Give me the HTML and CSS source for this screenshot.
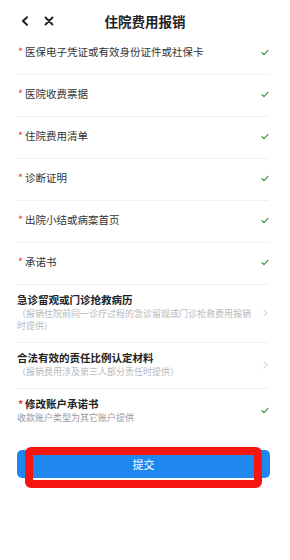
FILE: index.html
```html
<!DOCTYPE html>
<html lang="zh-CN">
<head>
<meta charset="utf-8">
<title>住院费用报销</title>
<link rel="stylesheet" href="styles.css">
</head>
<body>
<div class="page">
  <header class="header">
    <div class="nav">
      <svg class="ico-back" width="8" height="10" viewBox="0 0 8 10"><path d="M6 1.2 L2 5 L6 8.8" fill="none" stroke="#222" stroke-width="2" stroke-linecap="round" stroke-linejoin="round"/></svg>
      <svg class="ico-close" width="10" height="10" viewBox="0 0 10 10"><path d="M1.5 1.5 L8.5 8.5 M8.5 1.5 L1.5 8.5" fill="none" stroke="#222" stroke-width="1.9" stroke-linecap="round"/></svg>
    </div>
    <h1 class="title">住院费用报销</h1>
    <div></div>
  </header>

  <ul class="list">
    <li class="row"><span class="label"><i class="req">*</i>医保电子凭证或有效身份证件或社保卡</span><svg class="check" viewBox="0 0 8 7"><path d="M1 3.8 L3 5.6 L7 1.4" fill="none" stroke="#3f9a4c" stroke-width="1.3" stroke-linecap="round" stroke-linejoin="round"/></svg></li>
    <li class="row"><span class="label"><i class="req">*</i>医院收费票据</span><svg class="check" viewBox="0 0 8 7"><path d="M1 3.8 L3 5.6 L7 1.4" fill="none" stroke="#3f9a4c" stroke-width="1.3" stroke-linecap="round" stroke-linejoin="round"/></svg></li>
    <li class="row"><span class="label"><i class="req">*</i>住院费用清单</span><svg class="check" viewBox="0 0 8 7"><path d="M1 3.8 L3 5.6 L7 1.4" fill="none" stroke="#3f9a4c" stroke-width="1.3" stroke-linecap="round" stroke-linejoin="round"/></svg></li>
    <li class="row"><span class="label"><i class="req">*</i>诊断证明</span><svg class="check" viewBox="0 0 8 7"><path d="M1 3.8 L3 5.6 L7 1.4" fill="none" stroke="#3f9a4c" stroke-width="1.3" stroke-linecap="round" stroke-linejoin="round"/></svg></li>
    <li class="row"><span class="label"><i class="req">*</i>出院小结或病案首页</span><svg class="check" viewBox="0 0 8 7"><path d="M1 3.8 L3 5.6 L7 1.4" fill="none" stroke="#3f9a4c" stroke-width="1.3" stroke-linecap="round" stroke-linejoin="round"/></svg></li>
    <li class="row"><span class="label"><i class="req">*</i>承诺书</span><svg class="check" viewBox="0 0 8 7"><path d="M1 3.8 L3 5.6 L7 1.4" fill="none" stroke="#3f9a4c" stroke-width="1.3" stroke-linecap="round" stroke-linejoin="round"/></svg></li>
    <li class="row row-multi">
      <div class="text">
        <div class="strong">急诊留观或门诊抢救病历</div>
        <div class="sub light">（报销住院前同一诊疗过程的急诊留观或门诊抢救费用报销时提供）</div>
      </div>
      <svg class="chev" viewBox="0 0 5 8"><path d="M1 1 L4 4 L1 7" fill="none" stroke="#c8c8c8" stroke-width="1" stroke-linecap="round" stroke-linejoin="round"/></svg>
    </li>
    <li class="row row-multi">
      <div class="text">
        <div class="strong">合法有效的责任比例认定材料</div>
        <div class="sub light">（报销费用涉及第三人部分责任时提供）</div>
      </div>
      <svg class="chev" viewBox="0 0 5 8"><path d="M1 1 L4 4 L1 7" fill="none" stroke="#c8c8c8" stroke-width="1" stroke-linecap="round" stroke-linejoin="round"/></svg>
    </li>
    <li class="row row-multi row-last">
      <div class="text">
        <div class="strong"><i class="req">*</i>修改账户承诺书</div>
        <div class="sub">收款账户类型为其它账户提供</div>
      </div>
      <svg class="check" viewBox="0 0 8 7"><path d="M1 3.8 L3 5.6 L7 1.4" fill="none" stroke="#3f9a4c" stroke-width="1.3" stroke-linecap="round" stroke-linejoin="round"/></svg>
    </li>
  </ul>

  <div class="actions">
    <button class="submit" type="button">提交</button>
    <div class="highlight"></div>
  </div>
</div>
</body>
</html>
```

FILE: styles.css
```css
* { box-sizing: border-box; }
html, body { margin: 0; padding: 0; background: #fff; }
body {
  font-family: "Noto Sans CJK SC", "Noto Sans", sans-serif;
  color: #333;
  width: 290px;
  height: 560px;
  overflow: hidden;
}
.page { position: relative; }

.header {
  display: grid;
  grid-template-columns: 1fr auto 1fr;
  align-items: center;
  height: 33px;
  padding-top: 9px;
}
.nav {
  display: flex;
  align-items: center;
  gap: 15px;
  padding-left: 21px;
}
.ico-back { width: 8px; height: 10px; display: block; }
.ico-close { width: 10px; height: 10px; display: block; }
.title {
  margin: 0;
  font-size: 13.5px;
  line-height: 16px;
  font-weight: 700;
  color: #222;
  letter-spacing: 0;
}

.list {
  list-style: none;
  margin: 0;
  padding: 0 21px 0 17px;
}
.row {
  display: flex;
  align-items: center;
  justify-content: space-between;
  padding: 12px 0 15px;
  border-bottom: 1px solid #f0f0f0;
  font-size: 10.5px;
  line-height: 14px;
}
.label { color: #333; padding-left: 1px; }
.req {
  font-style: normal;
  color: #e2403a;
  display: inline-block;
  width: 7px;
}
.check { width: 8px; height: 7px; display: block; flex: none; }
.chev { width: 5px; height: 8px; display: block; flex: none; margin-right: 1px; }

.row-multi { padding: 8px 0 10px; }
.row-last { border-bottom: none; }
.text { width: 238px; }
.strong { font-weight: 700; color: #222; font-size: 10.5px; line-height: 14px; }
.row-last .strong { padding-left: 1px; }
.sub {
  font-size: 9px;
  line-height: 12px;
  color: #9a9a9a;
  margin-top: 1px;
}
.sub.light { color: #b9b9b9; }

.actions {
  position: relative;
  padding: 16px 20px 0 17px;
}
.submit {
  display: block;
  width: 100%;
  height: 28px;
  border: none;
  border-radius: 5px;
  background: #1f87f0;
  color: #fff;
  font-family: "Noto Sans CJK SC", "Noto Sans", sans-serif;
  font-size: 11px;
  padding: 0;
}
.highlight {
  position: absolute;
  left: 25px;
  top: 13px;
  width: 237px;
  height: 41px;
  border: 8px solid #f5170f;
  border-radius: 6px;
  pointer-events: none;
}
```
